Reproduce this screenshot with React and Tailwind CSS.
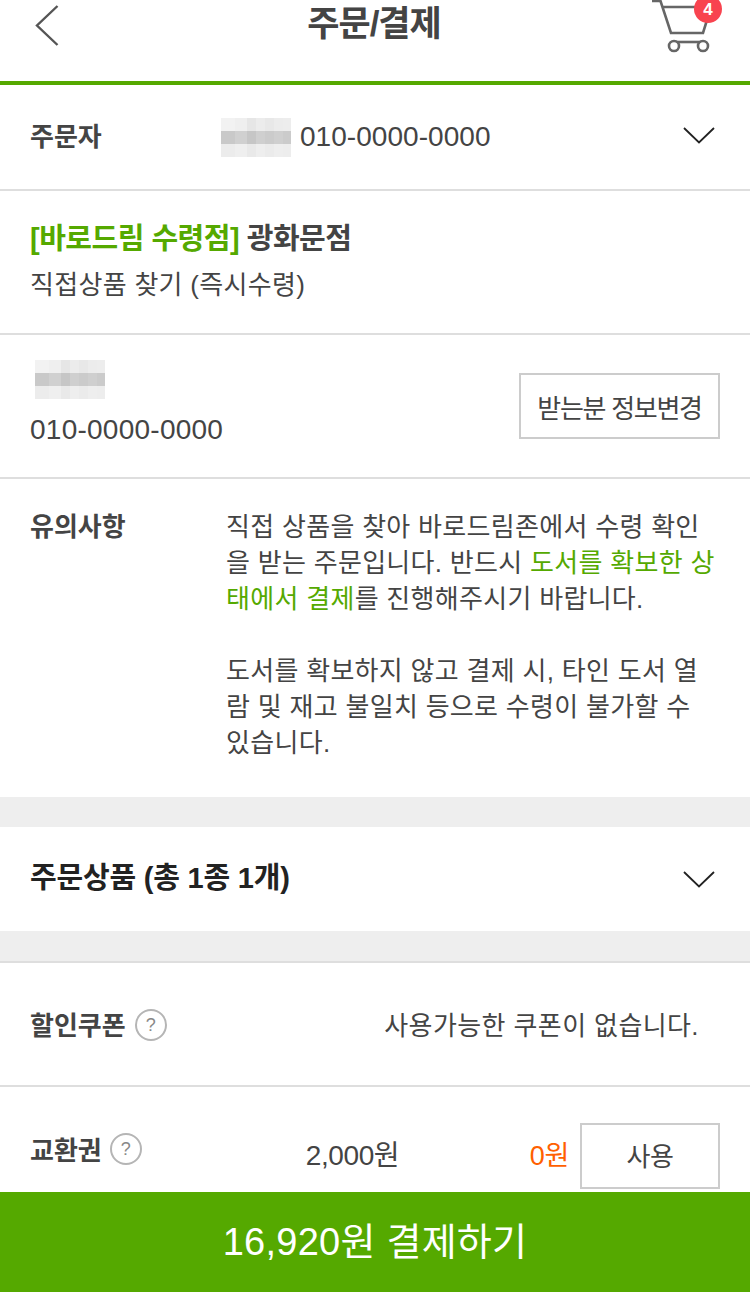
import React from 'react';

const font = 'font-["Liberation_Sans","Noto_Sans_CJK_KR",sans-serif]';

const Mosaic = () => {
    const cols = [14, 12, 9, 9, 9, 9, 8];
    const rows = [
        ['#f2f2f2', '#efefef', '#e6e6e6', '#ececec', '#e8e8e8', '#ececec', '#ededed'],
        ['#c9c9c9', '#d0d0d0', '#c6c6c6', '#cfcfcf', '#cbcbcb', '#cfcfcf', '#cbcbcb'],
        ['#ececec', '#efefef', '#e9e9e9', '#eeeeee', '#ebebeb', '#eeeeee', '#ededed'],
    ];
    let x = 0;
    const offsets = cols.map((c) => {
        const o = x;
        x += c;
        return o;
    });
    return (
        <svg width="70" height="39" viewBox="0 0 70 39" className="block shrink-0">
            {rows.map((row, r) =>
                row.map((fill, i) => (
                    <rect key={r + '-' + i} x={offsets[i]} y={r * 13} width={cols[i]} height="13" fill={fill} />
                ))
            )}
        </svg>
    );
};

const Chevron = () => (
    <svg width="32" height="17" viewBox="0 0 32 17" fill="none" className="block">
        <path d="M1 1 L16 15.5 L31 1" stroke="#222" strokeWidth="1.8" />
    </svg>
);

const Help = () => (
    <span className="w-[32px] h-[32px] rounded-full border-2 border-[#b5b5b5] flex items-center justify-center text-[18px] leading-none text-[#888] font-normal">
        ?
    </span>
);

const App = () => {
    return (
        <div className={`${font} w-[750px] h-[1292px] flex flex-col overflow-hidden bg-white text-[#444]`}>
            <div className="flex-1 overflow-hidden">
                <header className="h-[85px] border-b-4 border-[#55a900] flex items-start justify-between pl-[34px] pr-[32px]">
                    <svg width="26" height="42" viewBox="0 0 26 42" fill="none" className="mt-[5px]">
                        <path d="M23.5 1 L3 20.5 L23.5 40" stroke="#555" strokeWidth="2.4" />
                    </svg>
                    <h1 className="text-[35px] font-bold leading-[48px] tracking-[-1px] text-[#444] ml-[36px]">주문/결제</h1>
                    <div className="relative w-[66px] h-[54px]">
                        <svg width="66" height="54" viewBox="0 0 66 54" fill="none" className="block">
                            <path d="M0 1 H8.5 L19 33 H51 L55 20 M10 7 H48" stroke="#666" strokeWidth="2.6" />
                            <path d="M22 42 H51" stroke="#666" strokeWidth="2.6" />
                            <circle cx="22" cy="46" r="5" stroke="#666" strokeWidth="2.6" fill="#fff" />
                            <circle cx="51" cy="46" r="5" stroke="#666" strokeWidth="2.6" fill="#fff" />
                        </svg>
                        <span className="absolute left-[42px] top-[-5px] w-[28px] h-[28px] rounded-full bg-[#f8434f] text-white text-[17px] leading-none font-bold flex items-center justify-center">
                            4
                        </span>
                    </div>
                </header>

                <section className="h-[106px] border-b-2 border-[#dedede] flex items-center pl-[30px] pr-[35px]">
                    <span className="w-[191px] text-[26px] font-bold leading-none">주문자</span>
                    <Mosaic />
                    <span className="ml-[9px] text-[28px] leading-none tracking-[0.05px]">010-0000-0000</span>
                    <span className="ml-auto mt-[-3px]"><Chevron /></span>
                </section>

                <section className="h-[144px] border-b-2 border-[#dedede] pl-[30px] pt-[28px]">
                    <p className="text-[29px] font-bold leading-[40px] tracking-[-0.5px]">
                        <span className="text-[#55a900]">[바로드림 수령점]</span> 광화문점
                    </p>
                    <p className="text-[26px] leading-[36px] mt-[8px] tracking-[0.3px]">직접상품 찾기 (즉시수령)</p>
                </section>

                <section className="h-[144px] border-b-2 border-[#dedede] flex justify-between pl-[30px] pr-[30px]">
                    <div className="pt-[25px]">
                        <div className="ml-[5px]"><Mosaic /></div>
                        <p className="text-[28px] leading-none mt-[17px] tracking-[0.25px]">010-0000-0000</p>
                    </div>
                    <button className="mt-[38px] w-[201px] h-[66px] pt-[5px] border-2 border-[#cccccc] text-[26px] leading-none tracking-[-1.3px] text-[#444]">
                        받는분 정보변경
                    </button>
                </section>

                <section className="h-[318px] flex pl-[30px] pt-[30px]">
                    <span className="w-[196px] text-[26px] font-bold leading-[36px]">유의사항</span>
                    <div className="w-[510px] text-[26px] leading-[36px] tracking-[0.3px]">
                        <p>
                            직접 상품을 찾아 바로드림존에서 수령 확인<br />
                            을 받는 주문입니다. 반드시 <span className="text-[#55a900]">도서를 확보한 상<br />태에서 결제</span>를 진행해주시기 바랍니다.
                        </p>
                        <p className="mt-[36px]">
                            도서를 확보하지 않고 결제 시, 타인 도서 열<br />
                            람 및 재고 불일치 등으로 수령이 불가할 수<br />
                            있습니다.
                        </p>
                    </div>
                </section>

                <div className="h-[30px] bg-[#eeeeee]" />

                <section className="h-[104px] flex items-center justify-between pl-[30px] pr-[35px]">
                    <span className="text-[29px] font-bold text-[#222] tracking-[-0.2px]">주문상품 (총 1종 1개)</span>
                    <Chevron />
                </section>

                <div className="h-[30px] bg-[#eeeeee]" />

                <section className="h-[126px] border-y-2 border-[#dedede] flex items-center pl-[30px] pr-[51px]">
                    <span className="text-[26px] font-bold mt-[4px]">할인쿠폰</span>
                    <span className="ml-[9px] mt-[2px]"><Help /></span>
                    <span className="ml-auto text-[26px] tracking-[0.4px] mt-[4px]">사용가능한 쿠폰이 없습니다.</span>
                </section>

                <section className="h-[105px] flex pl-[30px] pr-[30px]">
                    <span className="mt-[46px] text-[26px] font-bold leading-[36px]">교환권</span>
                    <span className="ml-[8px] mt-[46px]"><Help /></span>
                    <span className="ml-[164px] mt-[51px] text-[28px] leading-[36px] tracking-[-0.4px]">2,000원</span>
                    <span className="ml-auto mt-[51px] text-[27px] leading-[36px] text-[#ff6000] tracking-[-0.3px]">0원</span>
                    <button className="ml-[11px] mt-[36px] w-[140px] h-[66px] pt-[2px] shrink-0 border-2 border-[#cccccc] text-[26px] leading-none tracking-[-0.4px] text-[#444]">
                        사용
                    </button>
                </section>
            </div>

            <footer className="h-[100px] shrink-0 bg-[#55a900] text-white text-[38px] tracking-[0.25px] flex items-center justify-center">
                16,920원 결제하기
            </footer>
        </div>
    );
};

export default App;
